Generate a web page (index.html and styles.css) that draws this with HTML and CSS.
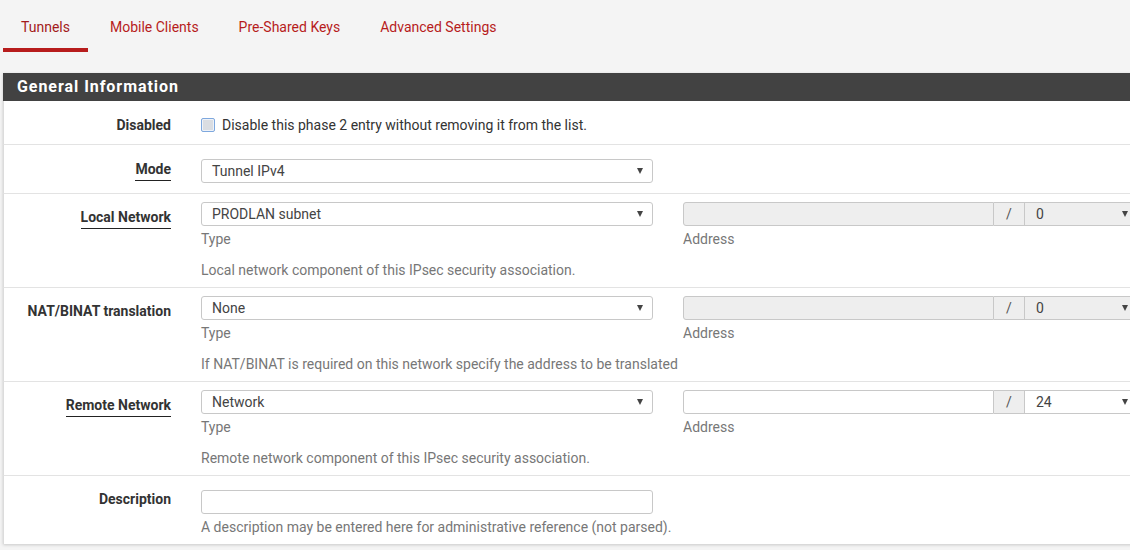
FILE: index.html
```html
<!DOCTYPE html>
<html>
<head>
<meta charset="utf-8">
<link rel="stylesheet" href="styles.css">
</head>
<body>
<nav class="tabs">
  <a class="tab active">Tunnels</a>
  <a class="tab">Mobile Clients</a>
  <a class="tab">Pre-Shared Keys</a>
  <a class="tab">Advanced Settings</a>
</nav>

<section class="panel">
  <h2 class="panel-heading">General Information</h2>

  <div class="row row-check">
    <div class="label-col"><span class="lbl">Disabled</span></div>
    <div class="field-col wide">
      <label class="check"><span class="box"></span>Disable this phase 2 entry without removing it from the list.</label>
    </div>
  </div>

  <div class="row row-simple">
    <div class="label-col"><span class="lbl ul">Mode</span></div>
    <div class="field-col">
      <div class="select"><span>Tunnel IPv4</span><i class="caret"></i></div>
    </div>
  </div>

  <div class="row row-net">
    <div class="label-col"><span class="lbl ul">Local Network</span></div>
    <div class="field-col">
      <div class="select"><span>PRODLAN subnet</span><i class="caret"></i></div>
      <div class="sub">Type</div>
      <div class="help">Local network component of this IPsec security association.</div>
    </div>
    <div class="field-col">
      <div class="group disabled">
        <div class="g-input"></div>
        <div class="g-addon">/</div>
        <div class="g-select"><span>0</span><i class="caret"></i></div>
      </div>
      <div class="sub">Address</div>
    </div>
  </div>

  <div class="row row-net">
    <div class="label-col"><span class="lbl">NAT/BINAT translation</span></div>
    <div class="field-col">
      <div class="select"><span>None</span><i class="caret"></i></div>
      <div class="sub">Type</div>
      <div class="help">If NAT/BINAT is required on this network specify the address to be translated</div>
    </div>
    <div class="field-col">
      <div class="group disabled">
        <div class="g-input"></div>
        <div class="g-addon">/</div>
        <div class="g-select"><span>0</span><i class="caret"></i></div>
      </div>
      <div class="sub">Address</div>
    </div>
  </div>

  <div class="row row-net">
    <div class="label-col"><span class="lbl ul">Remote Network</span></div>
    <div class="field-col">
      <div class="select"><span>Network</span><i class="caret"></i></div>
      <div class="sub">Type</div>
      <div class="help">Remote network component of this IPsec security association.</div>
    </div>
    <div class="field-col">
      <div class="group">
        <div class="g-input"></div>
        <div class="g-addon">/</div>
        <div class="g-select"><span>24</span><i class="caret"></i></div>
      </div>
      <div class="sub">Address</div>
    </div>
  </div>

  <div class="row row-desc">
    <div class="label-col"><span class="lbl">Description</span></div>
    <div class="field-col">
      <div class="input"></div>
      <div class="help tight">A description may be entered here for administrative reference (not parsed).</div>
    </div>
  </div>
</section>
</body>
</html>
```

FILE: styles.css
```css
html, body {
  margin: 0;
  padding: 0;
  overflow: hidden;
}
body {
  background: #f4f4f4;
  font-family: Roboto, "Liberation Sans", sans-serif;
  font-size: 14px;
  color: #333;
  width: 1130px;
  height: 550px;
}

.tabs {
  display: flex;
  gap: 4px;
  padding-left: 3px;
  height: 52px;
}
.tab {
  box-sizing: border-box;
  height: 52px;
  padding: 17px 18px 0;
  line-height: 20px;
  color: #b71c1c;
  border-bottom: 4px solid transparent;
  cursor: pointer;
}
.tab.active {
  color: #a31b1b;
  border-bottom-color: #b71c1c;
}

.panel {
  margin: 21px 0 0 3px;
  width: 1170px;
  background: #fff;
  box-shadow: 0 1px 3px rgba(0,0,0,0.18);
}
.panel-heading {
  margin: 0;
  height: 28px;
  line-height: 28px;
  padding: 0 14px;
  background: #424242;
  color: #fff;
  font-size: 16px;
  font-weight: 700;
  letter-spacing: 0.95px;
}

.row {
  display: flex;
  border-top: 1px solid #e3e3e3;
  border-left: 1px solid #dcdcdc;
}
.panel-heading + .row { border-top: none; }

.label-col {
  box-sizing: border-box;
  width: 182px;
  padding: 0 15px;
  text-align: right;
  flex: none;
}
.field-col {
  box-sizing: border-box;
  width: 482px;
  padding: 0 15px;
  flex: none;
}
.field-col.wide { width: 900px; }

.lbl {
  display: inline-block;
  font-weight: 700;
  color: #333;
  line-height: 20px;
}
.lbl.ul {
  border-bottom: 1px solid #222;
  padding-bottom: 1px;
}

.row-check { padding: 14px 0 9px; }
.row-simple { padding: 14px 0 10px; }
.row-simple .lbl { margin-top: 0; }
.row-net { padding: 8px 0 7px; }
.row-net .lbl { margin-top: 5px; }
.row-desc { padding: 14px 0 7px; }
.row-desc .lbl { margin-top: -1px; }

.check {
  display: flex;
  align-items: center;
  line-height: 20px;
  color: #333;
  white-space: nowrap;
}
.box {
  box-sizing: border-box;
  width: 14px;
  height: 14px;
  margin-right: 7px;
  border: 1px solid #7ea8de;
  border-radius: 2px;
  background: #dadde2;
  box-shadow: inset 0 0 0 1px #eef2f8;
}

.select, .input, .group {
  box-sizing: border-box;
  height: 24px;
}
.select {
  display: flex;
  align-items: center;
  padding: 0 9px 0 10px;
  border: 1px solid #c8c8c8;
  border-radius: 3px;
  color: #444;
  background: #fff;
}
.select span, .g-select span { flex: 1; }
.caret {
  width: 0;
  height: 0;
  border-left: 3.5px solid transparent;
  border-right: 3.5px solid transparent;
  border-top: 6px solid #444;
}
.input {
  border: 1px solid #c8c8c8;
  border-radius: 3px;
  background: #fff;
}

.group {
  display: flex;
}
.g-input {
  flex: 1;
  border: 1px solid #c8c8c8;
  border-radius: 3px 0 0 3px;
  background: #fff;
}
.g-addon {
  box-sizing: border-box;
  width: 31px;
  flex: none;
  border: 1px solid #c8c8c8;
  border-left: none;
  background: #eee;
  color: #555;
  text-align: center;
  line-height: 22px;
}
.g-select {
  box-sizing: border-box;
  width: 110px;
  flex: none;
  display: flex;
  align-items: center;
  padding: 0 6px 0 11px;
  border: 1px solid #c8c8c8;
  border-left: none;
  color: #444;
  background: #fff;
}
.group.disabled .g-input,
.group.disabled .g-select {
  background: #eee;
}

.sub {
  margin-top: 3px;
  line-height: 20px;
  color: #777;
}
.help {
  margin-top: 11px;
  line-height: 20px;
  color: #777;
  white-space: nowrap;
}
.help.tight { margin-top: 3px; }
```
